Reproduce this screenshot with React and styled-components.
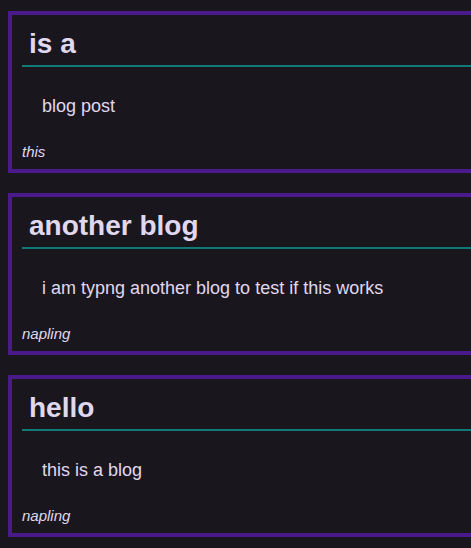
import styled, { createGlobalStyle } from "styled-components";

const GlobalStyle = createGlobalStyle`
    html, body {
        margin: 0;
        padding: 0;
        background: #19171d;
        overflow: hidden;
    }
    body {
        font-family: "Liberation Sans", Arial, sans-serif;
        color: #e0d8ef;
    }
`;

const PostList = styled.div`
    display: flex;
    flex-direction: column;
    gap: 20px;
    padding: 11px 0 0 8px;
`;

const PostCard = styled.article`
    width: 520px;
    box-sizing: border-box;
    border: 4px solid #4b1a8a;
    padding: 10px 10px 9px 10px;
    display: flex;
    flex-direction: column;
`;

const PostTitle = styled.h2`
    margin: 3px 0 0 0;
    padding: 0 0 5px 7px;
    font-size: 28px;
    font-weight: 700;
    line-height: 32px;
    border-bottom: 2px solid #107a76;
`;

const PostBody = styled.p`
    margin: 29px 0 0 20px;
    font-size: 18px;
    line-height: 20px;
`;

const PostAuthor = styled.span`
    margin-top: 27px;
    font-size: 15px;
    font-style: italic;
    line-height: 17px;
`;

const posts = [
    { title: "is a", body: "blog post", author: "this" },
    { title: "another blog", body: "i am typng another blog to test if this works", author: "napling" },
    { title: "hello", body: "this is a blog", author: "napling" },
];

const App = () => {
    return (
        <>
            <GlobalStyle />
            <PostList>
                {posts.map((post, i) => (
                    <PostCard key={i}>
                        <PostTitle>{post.title}</PostTitle>
                        <PostBody>{post.body}</PostBody>
                        <PostAuthor>{post.author}</PostAuthor>
                    </PostCard>
                ))}
            </PostList>
        </>
    );
};

export default App;
